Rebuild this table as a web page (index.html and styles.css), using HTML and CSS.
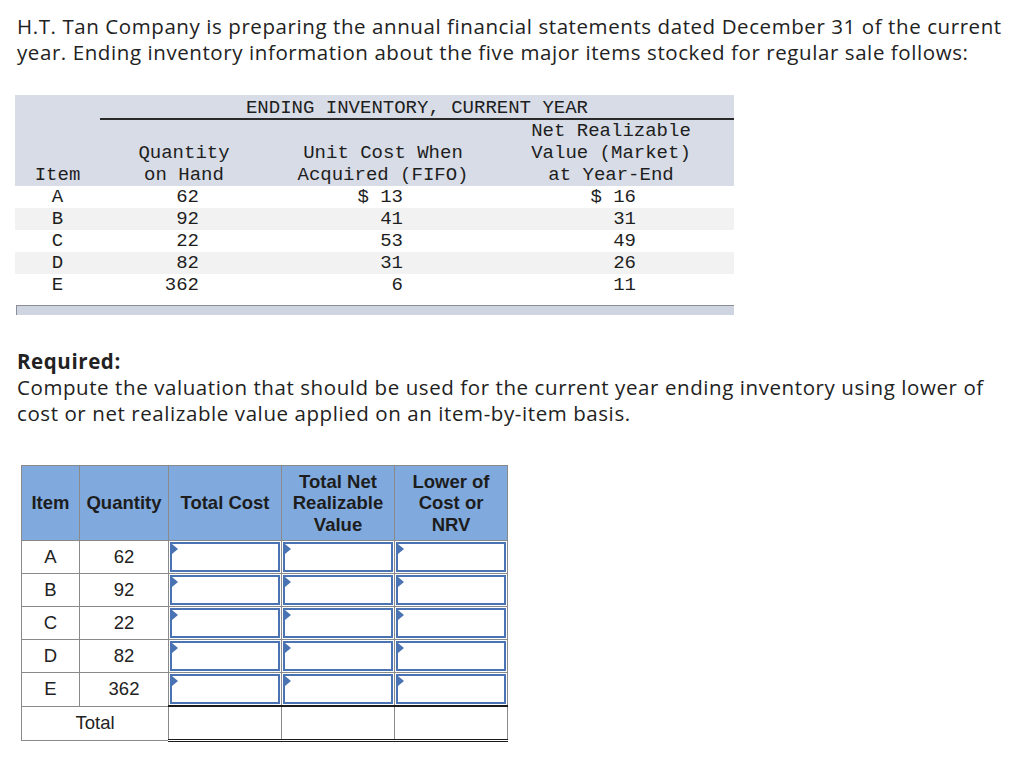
FILE: index.html
```html
<!DOCTYPE html>
<html>
<head>
<meta charset="utf-8">
<link rel="stylesheet" href="styles.css">
</head>
<body>
<div class="page">
  <p class="intro">H.T. Tan Company is preparing the annual financial statements dated December 31 of the current<br>year. Ending inventory information about the five major items stocked for regular sale follows:</p>

  <div class="inv">
    <table class="inv-table">
      <colgroup>
        <col class="c1"><col class="c2"><col class="c3"><col class="c4">
      </colgroup>
      <thead>
        <tr class="title-row">
          <th></th>
          <th colspan="3" class="title">ENDING INVENTORY, CURRENT YEAR</th>
        </tr>
        <tr>
          <th></th><th></th><th></th><th class="nrv">Net Realizable</th>
        </tr>
        <tr>
          <th></th><th class="qty">Quantity</th><th class="cost">Unit Cost When</th><th class="nrv">Value (Market)</th>
        </tr>
        <tr>
          <th>Item</th><th class="qty">on Hand</th><th class="cost">Acquired (FIFO)</th><th class="nrv">at Year-End</th>
        </tr>
      </thead>
      <tbody>
        <tr><td class="item">A</td><td class="n qty-n">62</td><td class="n cost-n">$ 13</td><td class="n nrv-n">$ 16</td></tr>
        <tr class="alt"><td class="item">B</td><td class="n qty-n">92</td><td class="n cost-n">41</td><td class="n nrv-n">31</td></tr>
        <tr><td class="item">C</td><td class="n qty-n">22</td><td class="n cost-n">53</td><td class="n nrv-n">49</td></tr>
        <tr class="alt"><td class="item">D</td><td class="n qty-n">82</td><td class="n cost-n">31</td><td class="n nrv-n">26</td></tr>
        <tr><td class="item">E</td><td class="n qty-n">362</td><td class="n cost-n">6</td><td class="n nrv-n">11</td></tr>
      </tbody>
    </table>
    <div class="inv-foot"></div>
  </div>

  <div class="required">
    <p class="req-title">Required:</p>
    <p class="req-text">Compute the valuation that should be used for the current year ending inventory using lower of<br>cost or net realizable value applied on an item-by-item basis.</p>
  </div>

  <table class="ans">
    <colgroup>
      <col class="a1"><col class="a2"><col class="a3"><col class="a4"><col class="a5">
    </colgroup>
    <thead>
      <tr>
        <th>Item</th><th>Quantity</th><th>Total Cost</th><th>Total Net<br>Realizable<br>Value</th><th>Lower of<br>Cost or<br>NRV</th>
      </tr>
    </thead>
    <tbody>
      <tr><td>A</td><td>62</td><td class="in"><div class="box"></div></td><td class="in"><div class="box"></div></td><td class="in"><div class="box"></div></td></tr>
      <tr><td>B</td><td>92</td><td class="in"><div class="box"></div></td><td class="in"><div class="box"></div></td><td class="in"><div class="box"></div></td></tr>
      <tr><td>C</td><td>22</td><td class="in"><div class="box"></div></td><td class="in"><div class="box"></div></td><td class="in"><div class="box"></div></td></tr>
      <tr><td>D</td><td>82</td><td class="in"><div class="box"></div></td><td class="in"><div class="box"></div></td><td class="in"><div class="box"></div></td></tr>
      <tr><td>E</td><td>362</td><td class="in"><div class="box"></div></td><td class="in"><div class="box"></div></td><td class="in"><div class="box"></div></td></tr>
      <tr class="total"><td colspan="2">Total</td><td class="tot"></td><td class="tot"></td><td class="tot"></td></tr>
    </tbody>
  </table>
</div>
</body>
</html>
```

FILE: styles.css
```css
html, body {
  margin: 0;
  padding: 0;
  background: #ffffff;
}

.page {
  padding: 0 0 0 17px;
  color: #222222;
}

.intro {
  margin: 13px 0 0 0;
  font-family: "Open Sans", "Liberation Sans", sans-serif;
  font-size: 20.5px;
  letter-spacing: 0.58px;
  line-height: 26px;
  color: #222222;
  white-space: nowrap;
}

.inv {
  margin: 30px 0 0 -2px;
  width: 719px;
}

.inv-table {
  width: 719px;
  border-collapse: collapse;
  table-layout: fixed;
  font-family: "Liberation Mono", "Courier New", monospace;
  font-size: 19px;
  color: #1e1e1e;
}

.c1 { width: 85px; }
.c2 { width: 176px; }
.c3 { width: 214px; }
.c4 { width: 244px; }

.inv-table thead th {
  background: #d7dce6;
  font-weight: normal;
  height: 22px;
  line-height: 22px;
  padding: 0;
  text-align: center;
  white-space: nowrap;
}

.inv-table .title-row th {
  height: 20px;
  line-height: 20px;
  padding: 3px 0 0 0;
}

.inv-table th.title {
  border-bottom: 2px solid #2a2a2a;
}

.inv-table th.qty { padding-right: 8px; }
.inv-table th.cost { padding-left: 0; }
.inv-table th.nrv { padding-right: 2px; }

.inv-table td {
  height: 22px;
  line-height: 22px;
  padding: 0;
  white-space: nowrap;
}

.inv-table tr.alt td {
  background: #f2f2f2;
}

.inv-table td.item { text-align: center; }
.inv-table td.n { text-align: right; }
.inv-table td.qty-n { padding-right: 77px; }
.inv-table td.cost-n { padding-right: 87px; }
.inv-table td.nrv-n { padding-right: 98px; }

.inv-foot {
  margin-top: 9px;
  margin-left: 1px;
  height: 9px;
  background: #cfd5e0;
  border-top: 1px solid #8a8e96;
  border-left: 1px solid #8a8e96;
}

.required {
  margin-top: 33px;
  font-family: "Open Sans", "Liberation Sans", sans-serif;
  font-size: 20.5px;
  letter-spacing: 0.58px;
  line-height: 26px;
  color: #222222;
}

.req-title {
  margin: 0;
  font-weight: bold;
}

.req-text {
  margin: 0;
  white-space: nowrap;
}

.ans {
  margin: 39px 0 0 4px;
  border-collapse: collapse;
  table-layout: fixed;
  width: 486px;
  font-family: "Liberation Sans", Arial, sans-serif;
  font-size: 18.5px;
  color: #222222;
}

.a1 { width: 58px; }
.a2 { width: 89px; }
.a3 { width: 113px; }
.a4 { width: 113px; }
.a5 { width: 113px; }

.ans th {
  background: #80aadd;
  border: 1px solid #8a8a8a;
  font-weight: bold;
  height: 74px;
  line-height: 21.5px;
  padding: 0;
  text-align: center;
  color: #1d1d1d;
}

.ans td {
  border: 1px solid #8a8a8a;
  height: 32px;
  padding: 0;
  text-align: center;
  vertical-align: middle;
}

.ans td.in {
  padding: 1px;
  height: 30px;
}

.box {
  position: relative;
  height: 26px;
  border: 2px solid #4a73b3;
  background: #ffffff;
}

.box::before {
  content: "";
  position: absolute;
  left: 0;
  top: 0;
  width: 0;
  height: 0;
  border-top: 5px solid transparent;
  border-bottom: 5px solid transparent;
  border-left: 6px solid #4a73b3;
}

.ans tr.total td {
  height: 32px;
}

.ans td.tot {
  border-top: 2px solid #1a1a1a;
  border-bottom: 3px double #1a1a1a;
}
```
